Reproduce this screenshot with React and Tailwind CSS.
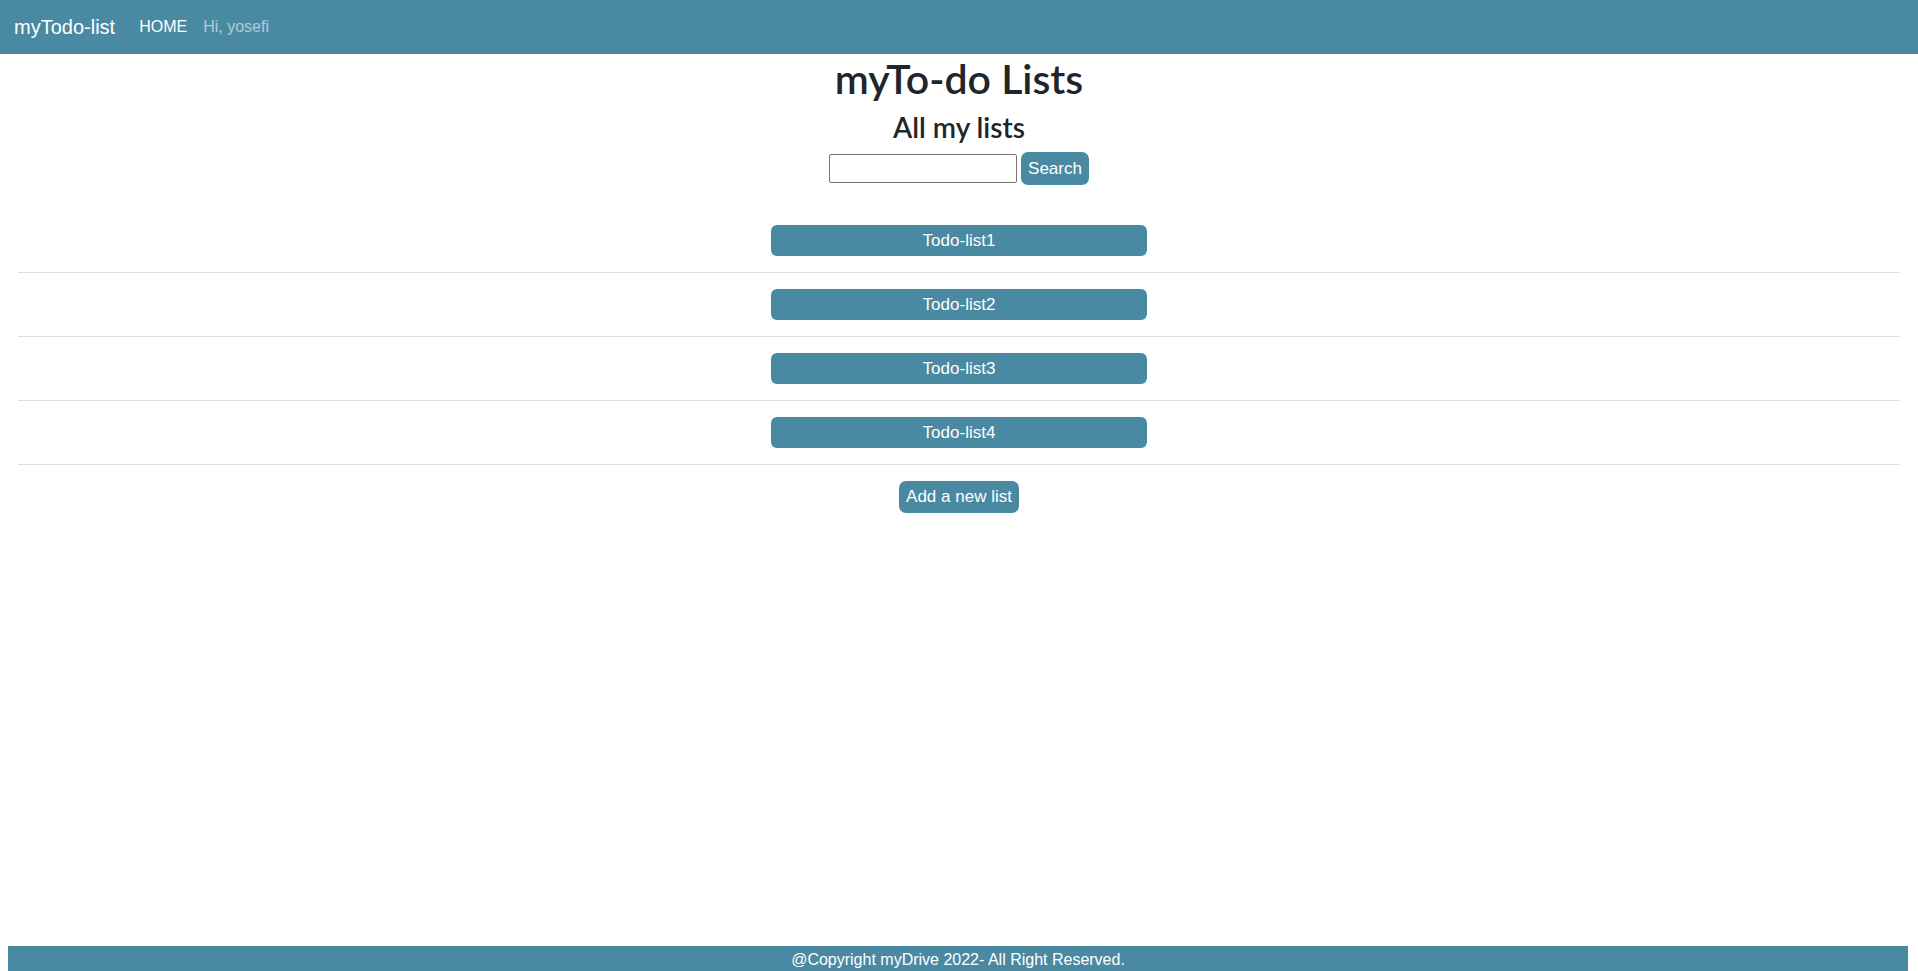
const lists = ["Todo-list1", "Todo-list2", "Todo-list3", "Todo-list4"];

const Navbar = () => {
    return (
        <nav className="flex h-[54px] items-center bg-[#4a89a2] px-[14px]">
            <span className="mr-[24px] text-[20px] text-white">myTodo-list</span>
            <span className="mr-[16px] text-[16px] text-white">HOME</span>
            <span className="text-[16px] text-white/55">Hi, yosefi</span>
        </nav>
    );
};

const App = () => {
    return (
        <div className="flex min-h-screen flex-col bg-white font-['Liberation_Sans',Arial,sans-serif] text-[#212529]">
            <Navbar />

            <main className="flex flex-col items-center px-[18px]">
                <h1 className="font-['Lato',sans-serif] text-[41px] leading-[1.2] font-semibold">myTo-do Lists</h1>
                <h2 className="mt-[8px] font-['Lato',sans-serif] text-[28px] leading-[1.2] font-semibold">All my lists</h2>

                {/* search */}
                <div className="mt-[7px] flex items-center gap-[4px]">
                    <input
                        type="text"
                        className="h-[29px] w-[188px] rounded-[2px] border border-[#767676] bg-white px-1 text-[16px] outline-none"
                    />
                    <button className="h-[33px] rounded-[7px] bg-[#4a89a2] px-[7px] text-[17px] text-white">
                        Search
                    </button>
                </div>

                {/* lists */}
                <ul className="mt-[40px] flex w-full flex-col items-center">
                    {lists.map((name) => (
                        <li key={name} className="flex w-full flex-col items-center">
                            <button className="h-[31px] w-[376px] rounded-[6px] bg-[#4a89a2] text-[17px] text-white">
                                {name}
                            </button>
                            <hr className="my-[16px] w-full border-t border-[#dedede]" />
                        </li>
                    ))}
                </ul>

                <button className="h-[32px] rounded-[7px] bg-[#4a89a2] px-[7px] text-[17px] text-white">
                    Add a new list
                </button>
            </main>

            <footer className="mt-auto ml-[8px] mr-[10px] flex h-[25px] items-center justify-center bg-[#4a89a2] pt-[2px] text-[16px] text-white">
                @Copyright myDrive 2022- All Right Reserved.
            </footer>
        </div>
    );
};

export default App;
